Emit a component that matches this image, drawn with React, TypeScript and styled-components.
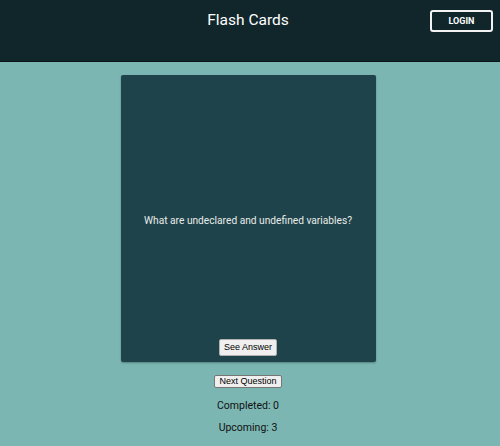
import React from "react";
import styled, { createGlobalStyle } from "styled-components";

const Global = createGlobalStyle`
  html, body { margin: 0; padding: 0; }
  body { background: #7bb6b2; font-family: Roboto, "Liberation Sans", sans-serif; }
`;

const Page = styled.div`
  min-height: 446px;
  display: flex;
  flex-direction: column;
`;

const Header = styled.header`
  height: 61px;
  background: #11262b;
  border-bottom: 1px solid #0a1518;
  position: relative;
  display: flex;
  justify-content: center;
  align-items: flex-start;
  padding-right: 4px;
`;

const Title = styled.h1`
  margin: 10px 0 0;
  font-size: 15.5px;
  font-weight: 400;
  color: #ffffff;
  line-height: 20px;
`;

const LoginButton = styled.button`
  position: absolute;
  top: 10px;
  right: 7px;
  width: 63px;
  height: 22px;
  background: transparent;
  border: 2px solid #f2f2f2;
  border-radius: 3px;
  color: #ffffff;
  font-family: Roboto, "Liberation Sans", sans-serif;
  font-weight: 700;
  font-size: 9px;
  padding: 0;
`;

const Main = styled.main`
  display: flex;
  flex-direction: column;
  align-items: center;
  padding-top: 13px;
  padding-right: 4px;
`;

const Card = styled.div`
  width: 255px;
  height: 287px;
  background: #1f434b;
  border-radius: 2px;
  box-shadow: 0 1px 2px rgba(0, 0, 0, 0.3);
  display: flex;
  flex-direction: column;
  align-items: center;
  box-sizing: border-box;
  padding-bottom: 6px;
`;

const Question = styled.p`
  flex: 1;
  display: flex;
  align-items: center;
  margin: 0;
  padding-top: 26px;
  color: #e8ece9;
  font-size: 10.2px;
`;

const PlainButton = styled.button`
  font-family: Arial, "Liberation Sans", sans-serif;
  font-size: 9px;
  color: #000;
  background: #efefef;
  border: 1px solid #767676;
  border-radius: 2px;
  padding: 0 4px;
  line-height: 11px;
`;

const SeeAnswer = styled(PlainButton)`
  padding: 2px 4px;
  border-color: #b0b0b0;
`;

const NextButton = styled(PlainButton)`
  margin-top: 13px;
`;

const Stat = styled.p`
  margin: 11px 0 0;
  font-size: 10.5px;
  color: #111;
  line-height: 14px;
`;

const StatSecond = styled(Stat)`
  margin-top: 8px;
`;

export default function App() {
  return (
    <Page>
      <Global />
      <Header>
        <Title>Flash Cards</Title>
        <LoginButton>LOGIN</LoginButton>
      </Header>
      <Main>
        <Card>
          <Question>What are undeclared and undefined variables?</Question>
          <SeeAnswer>See Answer</SeeAnswer>
        </Card>
        <NextButton>Next Question</NextButton>
        <Stat>Completed: 0</Stat>
        <StatSecond>Upcoming: 3</StatSecond>
      </Main>
    </Page>
  );
}
